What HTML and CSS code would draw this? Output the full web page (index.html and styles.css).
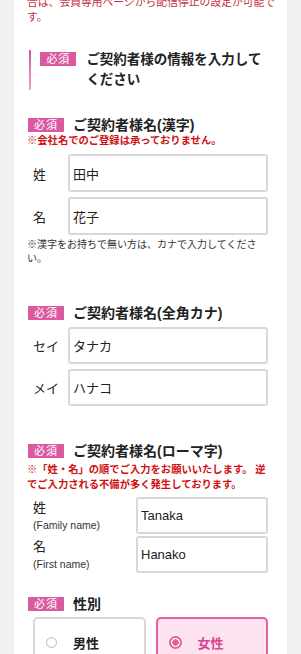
FILE: index.html
```html
<!DOCTYPE html>
<html lang="ja">

<head>
    <meta charset="UTF-8">
    <meta name="viewport" content="width=device-width, initial-scale=1.0">
    <title>ご契約者様の情報</title>
    <link rel="stylesheet" href="styles.css">
</head>

<body>
    <div class="card">
        <p class="lead">合は、会員専用ページから配信停止の設定が可能です。</p>

        <div class="intro">
            <span class="badge">必須</span>
            <h2 class="intro-title">ご契約者様の情報を入力してください</h2>
        </div>

        <!-- 漢字 -->
        <div class="section sec-kanji">
            <div class="section-head">
                <span class="badge">必須</span>
                <h3 class="section-title">ご契約者様名(漢字)</h3>
            </div>
            <p class="warn">※会社名でのご登録は承っておりません。</p>
            <div class="rows">
                <label class="row">
                    <span class="row-label">姓</span>
                    <input class="field" type="text" value="田中">
                </label>
                <label class="row">
                    <span class="row-label">名</span>
                    <input class="field" type="text" value="花子">
                </label>
            </div>
            <p class="hint">※漢字をお持ちで無い方は、カナで入力してください。</p>
        </div>

        <!-- カナ -->
        <div class="section sec-kana">
            <div class="section-head">
                <span class="badge">必須</span>
                <h3 class="section-title">ご契約者様名(全角カナ)</h3>
            </div>
            <div class="rows">
                <label class="row">
                    <span class="row-label">セイ</span>
                    <input class="field" type="text" value="タナカ">
                </label>
                <label class="row">
                    <span class="row-label">メイ</span>
                    <input class="field" type="text" value="ハナコ">
                </label>
            </div>
        </div>

        <!-- ローマ字 -->
        <div class="section sec-roma">
            <div class="section-head">
                <span class="badge">必須</span>
                <h3 class="section-title">ご契約者様名(ローマ字)</h3>
            </div>
            <p class="warn warn-wide">※「姓・名」の順でご入力をお願いいたします。 逆でご入力される不備が多く発生しております。</p>
            <div class="rows rows-tight">
                <label class="row row-wide">
                    <span class="row-label">
                        <span class="row-main">姓</span>
                        <span class="row-sub">(Family name)</span>
                    </span>
                    <input class="field" type="text" value="Tanaka">
                </label>
                <label class="row row-wide">
                    <span class="row-label">
                        <span class="row-main">名</span>
                        <span class="row-sub">(First name)</span>
                    </span>
                    <input class="field" type="text" value="Hanako">
                </label>
            </div>
        </div>

        <!-- 性別 -->
        <div class="section sec-gender">
            <div class="section-head">
                <span class="badge">必須</span>
                <h3 class="section-title">性別</h3>
            </div>
            <div class="choices">
                <div class="choice">
                    <span class="radio"></span>
                    <span class="choice-text">男性</span>
                </div>
                <div class="choice selected">
                    <span class="radio"></span>
                    <span class="choice-text">女性</span>
                </div>
            </div>
        </div>
    </div>
</body>

</html>
```

FILE: styles.css
```css
body {
    margin: 0;
    background-color: #f0f0f0;
    font-family: "Liberation Sans", "Noto Sans CJK JP", sans-serif;
    color: #222;
    overflow: hidden;
}

.card {
    margin-left: 14px;
    width: 241px;
    padding: 0 19px 40px 13px;
    background-color: #fff;
    min-height: 700px;
}

.lead {
    margin: -5px -12px 0 0;
    font-size: 10.8px;
    line-height: 15px;
    color: #c62d3f;
}

/* intro block with pink bar */
.intro {
    display: flex;
    align-items: flex-start;
    margin: 25px 0 0 2px;
}

.intro::before {
    content: "";
    width: 3px;
    align-self: stretch;
    margin-right: 9px;
    background: linear-gradient(#d2579a, #eea3c8);
}

.intro .badge {
    margin-top: 2px;
    margin-right: 10px;
}

.intro-title {
    margin: 0;
    font-size: 13.5px;
    line-height: 20px;
    font-weight: bold;
}

.badge {
    flex: none;
    display: inline-block;
    height: 14px;
    padding: 0 6px;
    background-color: #db5a9f;
    color: #fff;
    font-size: 11px;
    line-height: 14px;
    letter-spacing: 1px;
}

/* sections */
.sec-kanji {
    margin-top: 26px;
}

.sec-kana {
    margin-top: 38px;
}

.sec-roma {
    margin-top: 36px;
}

.sec-gender {
    margin-top: 22px;
}

.section-head {
    display: flex;
    align-items: center;
    padding-left: 1px;
}

.section-head .badge {
    margin-right: 9px;
}

.section-title {
    margin: 0;
    font-size: 14px;
    line-height: 18px;
    font-weight: bold;
}

.warn {
    margin: 0;
    font-size: 10.3px;
    line-height: 14px;
    font-weight: bold;
    color: #cf1111;
}

.warn-wide {
    margin-top: 2px;
    line-height: 15px;
}

.rows {
    display: flex;
    flex-direction: column;
    gap: 5px;
    margin-top: 5px;
}

.sec-kanji .rows {
    margin-top: 6px;
}

.rows-tight {
    gap: 2px;
}

.row {
    display: flex;
    align-items: center;
}

.row-label {
    width: 35px;
    padding-left: 6px;
    font-size: 13px;
}

.row-wide .row-label {
    width: 103px;
    display: flex;
    flex-direction: column;
}

.row-main {
    line-height: 18px;
}

.row-sub {
    font-size: 10.5px;
    line-height: 16px;
    color: #333;
}

.field {
    flex: 1;
    min-width: 0;
    height: 37px;
    box-sizing: border-box;
    padding: 0 3px;
    border: 2px solid #d8d8d8;
    border-radius: 3px;
    background-color: #fff;
    font-family: "Liberation Sans", "Noto Sans CJK JP", sans-serif;
    font-size: 13px;
    color: #222;
}

.sec-kanji .field {
    height: 38px;
}

.hint {
    margin: 3px 0 0;
    font-size: 10px;
    line-height: 14px;
    color: #333;
}

/* gender */
.choices {
    display: grid;
    grid-template-columns: 1fr 1fr;
    gap: 10px;
    margin-top: 4px;
    padding-left: 6px;
}

.choice {
    display: flex;
    align-items: center;
    height: 50px;
    padding: 0 11px;
    border: 2px solid #d8d8d8;
    border-radius: 5px;
    box-sizing: border-box;
}

.radio {
    width: 11px;
    height: 11px;
    border: 1px solid #bbb;
    border-radius: 50%;
    margin-right: 16px;
    box-sizing: border-box;
}

.choice-text {
    font-size: 13px;
    font-weight: bold;
}

.choice.selected {
    border-color: #e0629f;
    background-color: #fce3ef;
}

.choice.selected .radio {
    width: 13px;
    height: 13px;
    border: 2px solid #e0629f;
    background: radial-gradient(circle, #e0629f 0 3px, #fff 3.5px);
}

.choice.selected .choice-text {
    color: #d9468f;
}
```
